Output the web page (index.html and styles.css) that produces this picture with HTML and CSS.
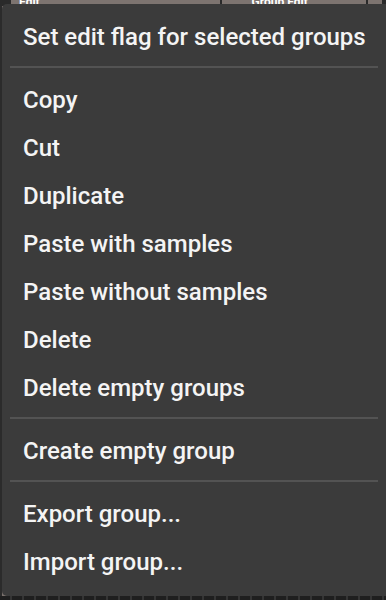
FILE: index.html
```html
<!DOCTYPE html>
<html>
<head>
  <link rel="stylesheet" href="styles.css">
</head>
<body>
  <div class="backdrop">
    <div class="top-strip">
      <span class="cell cell-a">Edit</span>
      <span class="cell cell-b">Group Edit</span>
      <span class="cell cell-c"></span>
      <span class="cell cell-d"></span>
    </div>
    <div class="grid-row"></div>
  </div>

  <div class="menu">
    <div class="menu-item">Set edit flag for selected groups</div>
    <div class="separator"></div>
    <div class="menu-item">Copy</div>
    <div class="menu-item">Cut</div>
    <div class="menu-item">Duplicate</div>
    <div class="menu-item">Paste with samples</div>
    <div class="menu-item">Paste without samples</div>
    <div class="menu-item">Delete</div>
    <div class="menu-item">Delete empty groups</div>
    <div class="separator"></div>
    <div class="menu-item">Create empty group</div>
    <div class="separator"></div>
    <div class="menu-item">Export group...</div>
    <div class="menu-item">Import group...</div>
  </div>
</body>
</html>
```
FILE: styles.css
```css
:root {
  --menu-bg: #3b3b3b;
  --menu-fg: #f4f4f4;
  --separator: #535353;
  --strip: #7d7470;
}

body {
  margin: 0;
  width: 386px;
  height: 600px;
  overflow: hidden;
  position: relative;
  background: #2a2a2a;
  font-family: Roboto, "Noto Sans", sans-serif;
}

.backdrop {
  position: absolute;
  inset: 0;
  background: linear-gradient(to right, #2b2b2b 0 2px, #7a716d 2px 8px, #2a2a2a 8px);
}

.top-strip {
  height: 6px;
  display: flex;
  background: #2a2a2a;
}

.cell {
  background: var(--strip);
  color: #fff;
  font-size: 12px;
  font-weight: 700;
  line-height: 4px;
  overflow: hidden;
  margin-right: 2px;
}

.cell-a { width: 206px; margin-left: 11px; padding-left: 8px; }
.cell-b { width: 118px; padding-left: 30px; }
.cell-c { width: 14px; }
.cell-d { flex: 1; }

.grid-row {
  position: absolute;
  left: 0;
  right: 0;
  bottom: 0;
  height: 4px;
  background: repeating-linear-gradient(to right, #1f1f1f 0 10px, #353535 10px 12px);
}

.menu {
  position: absolute;
  top: 4px;
  left: 2px;
  right: -6px;
  bottom: 4px;
  background: var(--menu-bg);
  border-radius: 5px;
  padding: 8px 0;
  box-sizing: border-box;
  color: var(--menu-fg);
}

.menu-item {
  height: 48px;
  line-height: 50px;
  padding-left: 21px;
  font-size: 24px;
  font-weight: 500;
  white-space: nowrap;
}

.separator {
  height: 2px;
  margin: 6px 14px 7px 8px;
  background: var(--separator);
}
```
